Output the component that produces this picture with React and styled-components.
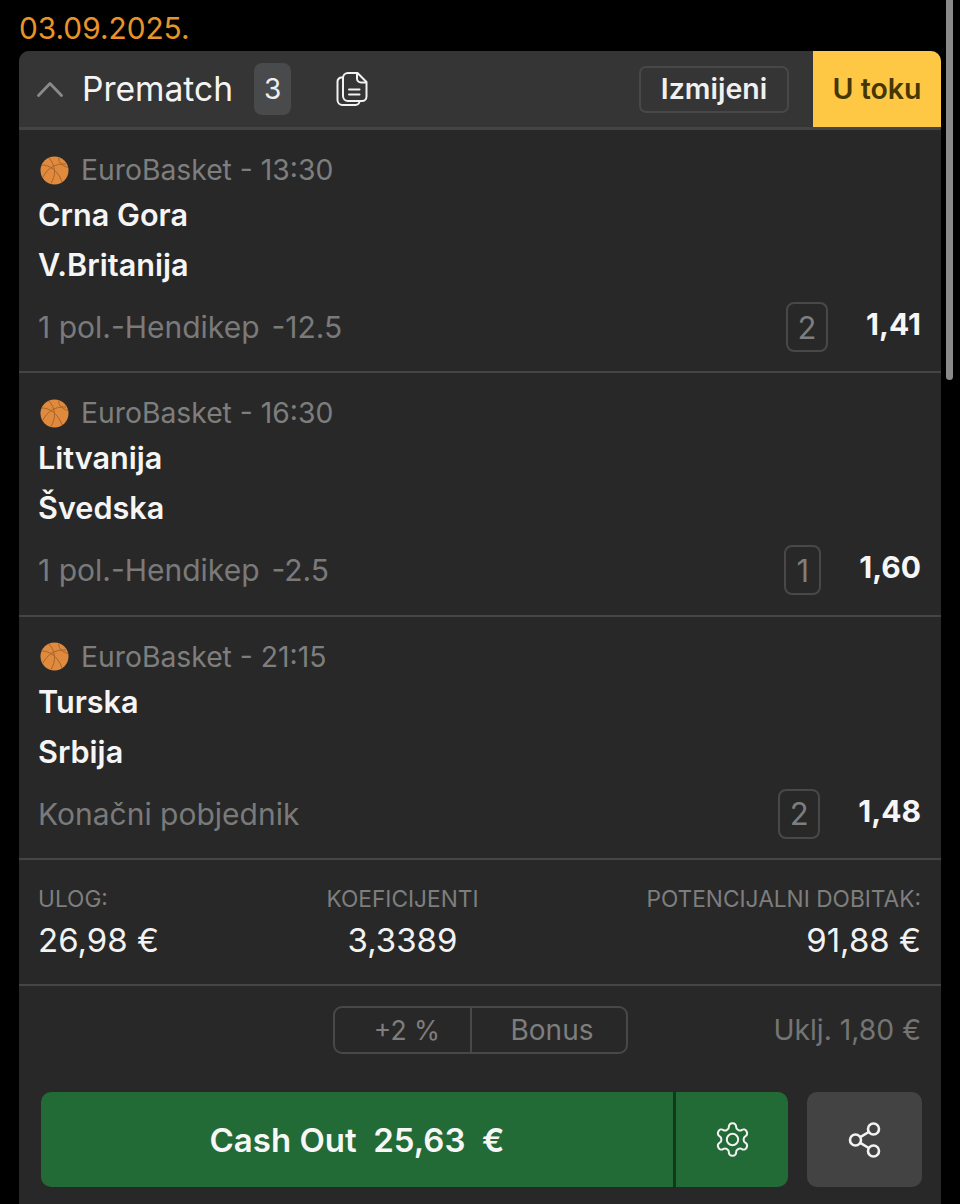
import React from "react";
import styled, { createGlobalStyle } from "styled-components";

const Global = createGlobalStyle`
  html, body { margin: 0; padding: 0; background: #000; height: 100%; overflow: hidden; }
  body { font-family: Inter, "Noto Sans", sans-serif; }
`;
const Page = styled.div`
  position: relative; width: 960px; height: 1204px; background: #000; overflow: hidden;
  padding: 0 19px; box-sizing: border-box;
`;
const Scrollbar = styled.div`
  position: absolute; left: 946px; top: -6px; width: 7px; height: 386px; border-radius: 4px; background: #8a8a8a;
`;
const DateText = styled.div`
  height: 51px; padding: 12px 0 0 0; box-sizing: border-box; color: #e8942a; font-size: 29.8px; line-height: 32px;
`;
const Card = styled.div`
  width: 922px; height: 1153px; background: #282828; border-radius: 10px 10px 0 0; overflow: hidden;
`;
const Header = styled.div`
  height: 79px; box-sizing: border-box; background: #353535; border-bottom: 3px solid #444;
  display: flex; align-items: stretch; position: relative;
`;
const HeaderLeft = styled.div`
  flex: 1; display: flex; align-items: center; padding-left: 18px;
`;
const Title = styled.span`
  color: #f4f4f4; font-size: 33.6px; line-height: 36px; margin: 0 0 1px 19px;
`;
const CountBadge = styled.span`
  width: 37px; height: 52px; margin-left: 21px; border-radius: 8px; background: #484a4c; color: #eee;
  display: flex; align-items: center; justify-content: center; font-size: 28px;
`;
const CopyWrap = styled.span`
  display: flex; margin-left: 45px;
`;
const EditButton = styled.button`
  width: 150px; height: 47px; margin: 0 24px 0 0; align-self: center; box-sizing: border-box; background: transparent;
  border: 2px solid #484848; border-radius: 7px; color: #f0f0f0; font: 600 28.5px Inter, sans-serif; padding: 0 0 2px;
`;
const LiveTab = styled.div`
  width: 128px; background: #ffc844; color: #453604; font-size: 28.5px; font-weight: 600; padding-bottom: 2px; box-sizing: border-box;
  display: flex; align-items: center; justify-content: center;
`;
const Match = styled.div`
  height: 243.4px; box-sizing: border-box; border-bottom: 2px solid #454545; padding: 0 20px 0 19px; position: relative;
`;
const League = styled.div`
  display: flex; align-items: center; height: 32px; padding-top: 24px; margin-bottom: 4px; color: #7e7e7e; font-size: 28.3px; line-height: 32px;
  svg { margin: 0 12px 0 2px; }
`;
const Team = styled.div`
  color: #f5f5f5; font-size: 30.6px; font-weight: 600; height: 50px; line-height: 50px;
`;
const MarketRow = styled.div`
  display: flex; align-items: center; height: 50px; margin-top: 12px; color: #7a7a7a; font-size: 30px;
`;
const MarketName = styled.span`
  flex: 1; white-space: nowrap;
`;
const MarketValue = styled.span`
  margin-left: 12px;
`;
const Pick = styled.span`
  box-sizing: border-box; width: ${p => p.$w}px; height: 50px; border: 2px solid #484848; border-radius: 8px; color: #7e7e7e;
  display: flex; align-items: center; justify-content: center; font-size: 31px;
`;
const Odd = styled.span`
  margin-left: 38px; text-align: right; color: #f6f6f6; font-size: 30px; font-weight: 700; position: relative; top: -3px;
`;
const Totals = styled.div`
  height: 126px; box-sizing: border-box; border-bottom: 2px solid #454545; padding: 25px 20px 0 19px;
  display: grid; grid-template-columns: 288px 153px 1fr;
`;
const Col = styled.div`
  display: flex; flex-direction: column; align-items: ${p => p.$align}; white-space: nowrap;
`;
const Label = styled.div`
  color: #7e7e7e; font-size: 22.7px; line-height: 28px;
`;
const Value = styled.div`
  color: #f2f2f2; font-size: 33px; line-height: 36px; margin-top: 9px;
`;
const BonusRow = styled.div`
  height: 106px; box-sizing: border-box; padding: 20px 20px 0 314px; display: flex; align-items: flex-start; justify-content: space-between;
`;
const Segment = styled.div`
  display: flex; box-sizing: border-box; width: 295px; height: 48px; border: 2px solid #484848; border-radius: 9px;
`;
const SegItem = styled.div`
  width: ${p => p.$w}px; ${p => p.$line ? "border-right: 2px solid #484848;" : ""}
  display: flex; align-items: center; justify-content: center; box-sizing: border-box; color: #7e7e7e; font-size: ${p => p.$size}px; padding-left: ${p => p.$pl || 0}px;
`;
const Included = styled.div`
  color: #747474; font-size: 28.3px; line-height: 48px;
`;
const Actions = styled.div`
  display: flex; padding: 0 19px 0 22px; height: 95px;
`;
const CashOut = styled.div`
  display: flex; width: 747px; background: #226a36; border-radius: 10px; overflow: hidden;
`;
const CashMain = styled.div`
  width: 632px; border-right: 3px solid #14381e; box-sizing: content-box;
  display: flex; align-items: center; justify-content: center; color: #f7f7f7; font-size: 33px; font-weight: 600; white-space: pre;
`;
const CashSettings = styled.div`
  flex: 1; display: flex; align-items: center; justify-content: center; color: #eee;
`;
const ShareButton = styled.div`
  width: 115px; margin-left: 19px; border-radius: 10px; background: #434343; display: flex; align-items: center; justify-content: center;
`;

const Chevron = () => (
  <svg width="26" height="18" viewBox="0 0 26 18" fill="none" stroke="#8a8a8a" strokeWidth="2.8" strokeLinecap="round" strokeLinejoin="round">
    <path d="M1.5 15.5 13 3.5l11.5 12" />
  </svg>
);
const CopyIcon = () => (
  <svg width="32" height="34" viewBox="0 0 32 34" fill="none" stroke="#f2f2f2" strokeWidth="2" strokeLinecap="round" strokeLinejoin="round">
    <path d="M7 5.5H5.5A4 4 0 0 0 1.5 9.5v18.500a5 5 0 0 0 5 5h13a4 4 0 0 0 4-4" />
    <path d="M7 6a5 5 0 0 1 5-5h9.500L30.500 10v14.500a4.500 4.500 0 0 1-4.500 4.500H12a5 5 0 0 1-5-5Z" />
    <path d="M21 1.500V6.500a4 4 0 0 0 4 4h5" />
    <path d="M13 17.500h10.500M13 22.500h10.500" />
  </svg>
);
const Ball = () => (
  <svg width="29" height="29" viewBox="0 0 29 29" fill="none">
    <circle cx="14.5" cy="14.5" r="14" fill="#e08a3e" />
    <g stroke="#a9642c" strokeWidth="1" fill="none">
      <path d="M9 2c3 3 5 8 5.500 12.500S13 24 11 27.500" />
      <path d="M2 9c7 0 16 5 20 17" />
      <path d="M3 21c4-8 12-14 23-13" />
      <path d="M19 1.500c-1 4 2 8 9 10" />
    </g>
  </svg>
);
const Gear = () => (
  <svg width="39" height="39" viewBox="0 0 24 24" fill="none" stroke="#f2f2f2" strokeWidth="1.25" strokeLinecap="round" strokeLinejoin="round">
    <path d="M12.22 2h-.44a2 2 0 0 0-2 2v.18a2 2 0 0 1-1 1.73l-.43.25a2 2 0 0 1-2 0l-.15-.08a2 2 0 0 0-2.73.73l-.22.38a2 2 0 0 0 .73 2.73l.15.1a2 2 0 0 1 1 1.72v.51a2 2 0 0 1-1 1.74l-.15.09a2 2 0 0 0-.73 2.73l.22.38a2 2 0 0 0 2.73.73l.15-.08a2 2 0 0 1 2 0l.43.25a2 2 0 0 1 1 1.73V20a2 2 0 0 0 2 2h.44a2 2 0 0 0 2-2v-.18a2 2 0 0 1 1-1.73l.43-.25a2 2 0 0 1 2 0l.15.08a2 2 0 0 0 2.73-.73l.22-.39a2 2 0 0 0-.73-2.73l-.15-.08a2 2 0 0 1-1-1.74v-.5a2 2 0 0 1 1-1.74l.15-.09a2 2 0 0 0 .73-2.73l-.22-.38a2 2 0 0 0-2.73-.73l-.15.08a2 2 0 0 1-2 0l-.43-.25a2 2 0 0 1-1-1.73V4a2 2 0 0 0-2-2z" />
    <circle cx="12" cy="12" r="3.5" />
  </svg>
);
const Share = () => (
  <svg width="34" height="36" viewBox="0 0 34 36" fill="none" stroke="#f2f2f2" strokeWidth="2.6">
    <circle cx="7.5" cy="18" r="5.5" />
    <circle cx="25.5" cy="7" r="5.5" />
    <circle cx="25.5" cy="29" r="5.5" />
    <path d="M12.3 15.2 20.7 10M12.3 20.8l8.400 5.200" />
  </svg>
);

const matches = [
  { time: "13:30", a: "Crna Gora", b: "V.Britanija", market: "1 pol.-Hendikep", line: "-12.5", pick: "2", w: 42, odd: "1,41" },
  { time: "16:30", a: "Litvanija", b: "Švedska", market: "1 pol.-Hendikep", line: "-2.5", pick: "1", w: 37, odd: "1,60" },
  { time: "21:15", a: "Turska", b: "Srbija", market: "Konačni pobjednik", pick: "2", w: 42, odd: "1,48" },
];

export default function App() {
  return (
    <Page>
      <Global />
      <Scrollbar />
      <DateText>03.09.2025.</DateText>
      <Card>
        <Header>
          <HeaderLeft>
            <Chevron />
            <Title>Prematch</Title>
            <CountBadge>3</CountBadge>
            <CopyWrap><CopyIcon /></CopyWrap>
          </HeaderLeft>
          <EditButton>Izmijeni</EditButton>
          <LiveTab>U toku</LiveTab>
        </Header>
        {matches.map(m => (
          <Match key={m.time}>
            <League><Ball />EuroBasket - {m.time}</League>
            <Team>{m.a}</Team>
            <Team>{m.b}</Team>
            <MarketRow>
              <MarketName>{m.market}{m.line && <MarketValue>{m.line}</MarketValue>}</MarketName>
              <Pick $w={m.w}>{m.pick}</Pick>
              <Odd>{m.odd}</Odd>
            </MarketRow>
          </Match>
        ))}
        <Totals>
          <Col $align="flex-start">
            <Label>ULOG:</Label>
            <Value>26,98 €</Value>
          </Col>
          <Col $align="center">
            <Label>KOEFICIJENTI</Label>
            <Value>3,3389</Value>
          </Col>
          <Col $align="flex-end">
            <Label>POTENCIJALNI DOBITAK:</Label>
            <Value>91,88 €</Value>
          </Col>
        </Totals>
        <BonusRow>
          <Segment>
            <SegItem $w={137} $line $pl={9} $size={26.5}>+2 %</SegItem>
            <SegItem $w={154} $pl={6} $size={28}>Bonus</SegItem>
          </Segment>
          <Included>Uklj. 1,80 €</Included>
        </BonusRow>
        <Actions>
          <CashOut>
            <CashMain>Cash Out  25,63  €</CashMain>
            <CashSettings><Gear /></CashSettings>
          </CashOut>
          <ShareButton><Share /></ShareButton>
        </Actions>
      </Card>
    </Page>
  );
}
